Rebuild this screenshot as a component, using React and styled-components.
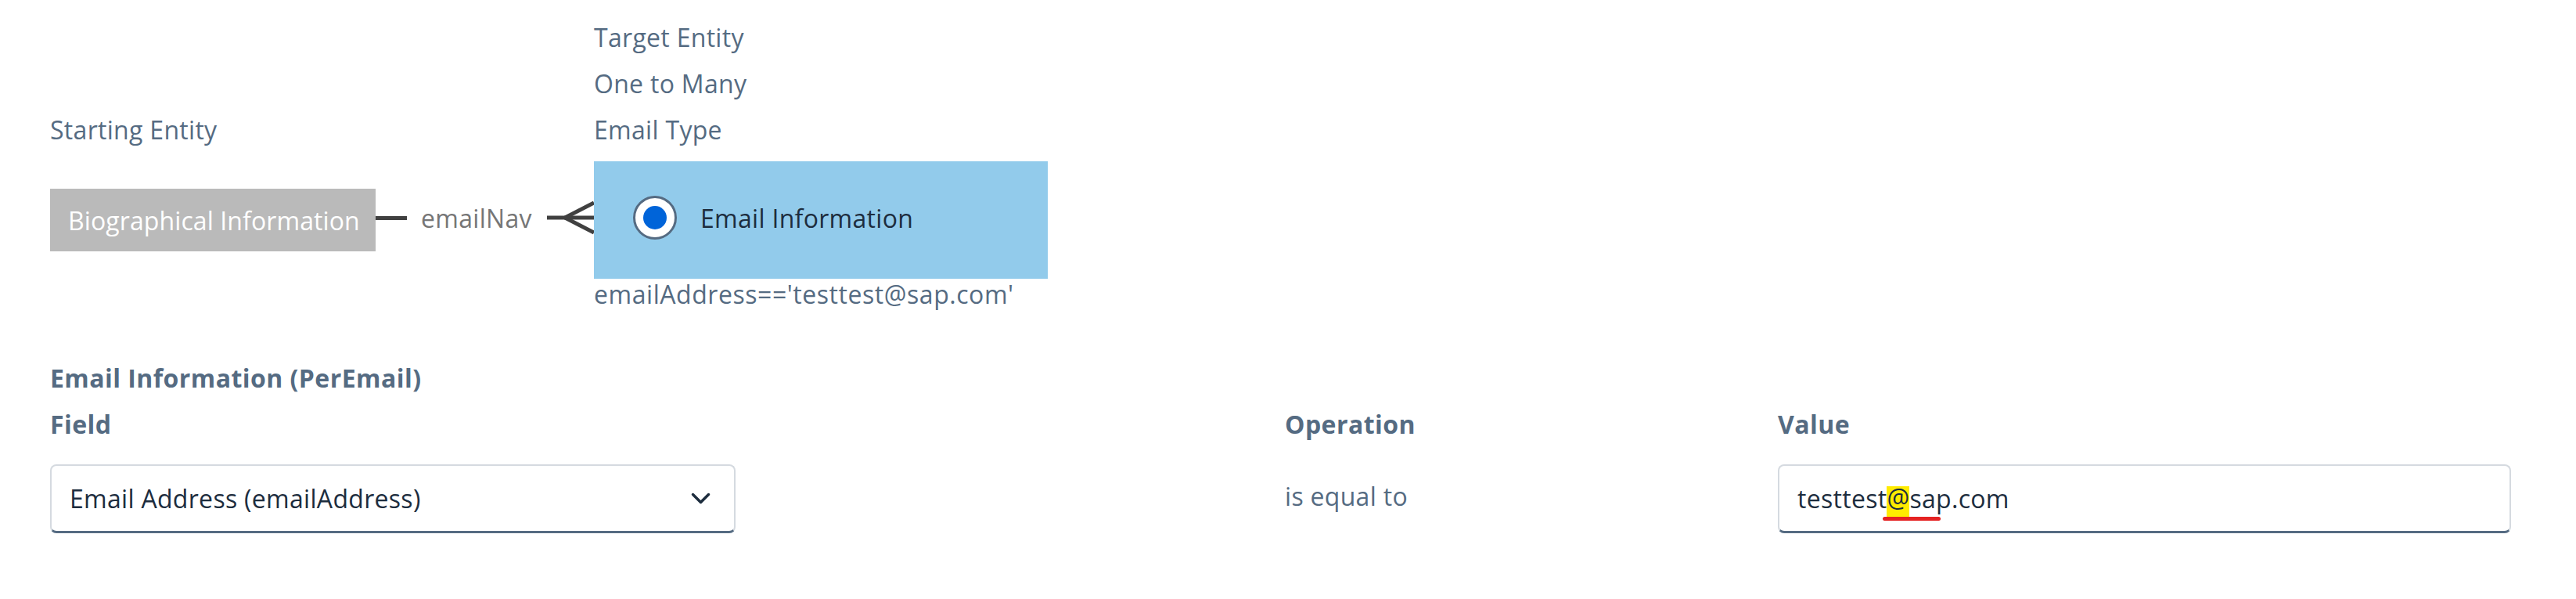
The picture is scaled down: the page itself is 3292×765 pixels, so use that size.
import React from 'react';
import styled, { createGlobalStyle } from 'styled-components';

const GlobalStyle = createGlobalStyle`
  body {
    margin: 0;
    background: #ffffff;
    font-family: "Open Sans", "Noto Sans", Arial, sans-serif;
  }
`;

const Page = styled.div`
  padding: 18px 82px 0 64px;
  font-size: 32px;
  letter-spacing: 0.3px;
  color: #556b82;
`;

const Diagram = styled.div`
  display: grid;
  grid-template-columns: 416px 279px 580px;
  grid-template-rows: repeat(3, 59px) auto 40px;
  grid-template-areas:
    '. . t1'
    '. . t2'
    'sl . t3'
    'src link target'
    '. . cond';
`;

const Label = styled.div`
  grid-area: ${props => props.$area};
  line-height: 59px;
  white-space: nowrap;
`;

const SourceEntity = styled.div`
  grid-area: src;
  align-self: center;
  margin-top: 11px;
  width: 416px;
  height: 80px;
  box-sizing: border-box;
  padding-left: 23px;
  display: flex;
  align-items: center;
  background: #bababa;
  color: #ffffff;
  letter-spacing: 0.1px;
  white-space: nowrap;
`;

const Connector = styled.div`
  grid-area: link;
  align-self: center;
  margin-top: 11px;
  margin-bottom: 6px;
  display: flex;
  align-items: center;
`;

const Line = styled.span`
  width: 40px;
  height: 5px;
  background: #404040;
`;

const NavName = styled.span`
  margin-left: 18px;
  color: #767676;
  white-space: nowrap;
`;

const CrowFoot = styled.svg`
  margin-left: auto;
  display: block;
`;

const TargetEntity = styled.div`
  grid-area: target;
  margin-top: 11px;
  height: 150px;
  box-sizing: border-box;
  padding: 0 0 6px 50px;
  display: flex;
  align-items: center;
  background: #92cbeb;
  color: #1d2d3e;
`;

const Radio = styled.span`
  width: 56px;
  height: 56px;
  box-sizing: border-box;
  border-radius: 50%;
  border: 3px solid #556b82;
  background: #ffffff;
  display: flex;
  align-items: center;
  justify-content: center;
  margin-right: 30px;
  flex-shrink: 0;

  &::after {
    content: '';
    width: 30px;
    height: 30px;
    border-radius: 50%;
    background: #0064d9;
  }
`;

const Condition = styled.div`
  grid-area: cond;
  line-height: 40px;
  letter-spacing: 0.55px;
  white-space: nowrap;
`;

const SectionTitle = styled.div`
  margin-top: 57px;
  line-height: 59px;
  font-weight: 700;
  letter-spacing: 0.45px;
`;

const FilterGrid = styled.div`
  display: grid;
  grid-template-columns: 1578px 630px 937px;
  grid-template-rows: 59px 88px;
  row-gap: 22px;
`;

const ColumnHeading = styled.div`
  line-height: 59px;
  font-weight: 700;
  letter-spacing: 0.45px;
`;

const Field = styled.div`
  width: ${props => props.$width || '100%'};
  height: 88px;
  box-sizing: border-box;
  border: 2px solid #d5dae0;
  border-bottom: 3px solid #556b82;
  border-radius: 8px;
  background: #ffffff;
  display: flex;
  align-items: center;
  padding: 0 30px 0 23px;
  color: #1d2d3e;
  white-space: nowrap;
`;

const Chevron = styled.svg`
  margin-left: auto;
  display: block;
`;

const Operation = styled.div`
  display: flex;
  align-items: center;
  padding-bottom: 8px;
`;

const Mark = styled.span`
  position: relative;
  padding-bottom: 3px;
  background: linear-gradient(to bottom, transparent 7px, #ffeb00 7px);

  &::after {
    content: '';
    position: absolute;
    left: -5px;
    top: 100%;
    width: 74px;
    height: 5px;
    border-radius: 3px;
    background: #e52222;
  }
`;

const App = () => (
  <Page>
    <GlobalStyle />
    <Diagram>
      <Label $area="t1">Target Entity</Label>
      <Label $area="t2">One to Many</Label>
      <Label $area="sl">Starting Entity</Label>
      <Label $area="t3">Email Type</Label>
      <SourceEntity>Biographical Information</SourceEntity>
      <Connector>
        <Line />
        <NavName>emailNav</NavName>
        <CrowFoot width="60" height="44" viewBox="0 0 60 44">
          <g stroke="#404040" strokeWidth="5" fill="none">
            <line x1="0" y1="22" x2="60" y2="22" />
            <line x1="23" y1="22" x2="60" y2="3" />
            <line x1="23" y1="22" x2="60" y2="41" />
          </g>
        </CrowFoot>
      </Connector>
      <TargetEntity>
        <Radio />
        Email Information
      </TargetEntity>
      <Condition>emailAddress=='testtest@sap.com'</Condition>
    </Diagram>

    <SectionTitle>Email Information (PerEmail)</SectionTitle>
    <FilterGrid>
      <ColumnHeading>Field</ColumnHeading>
      <ColumnHeading>Operation</ColumnHeading>
      <ColumnHeading>Value</ColumnHeading>
      <Field $width="876px">
        Email Address (emailAddress)
        <Chevron width="25" height="15" viewBox="0 0 25 15">
          <polyline
            points="2.5,2.5 12.5,12.5 22.5,2.5"
            fill="none"
            stroke="#1d2d3e"
            strokeWidth="3.5"
            strokeLinecap="round"
            strokeLinejoin="round"
          />
        </Chevron>
      </Field>
      <Operation>is equal to</Operation>
      <Field>
        testtest<Mark>@</Mark>sap.com
      </Field>
    </FilterGrid>
  </Page>
);

export default App;
